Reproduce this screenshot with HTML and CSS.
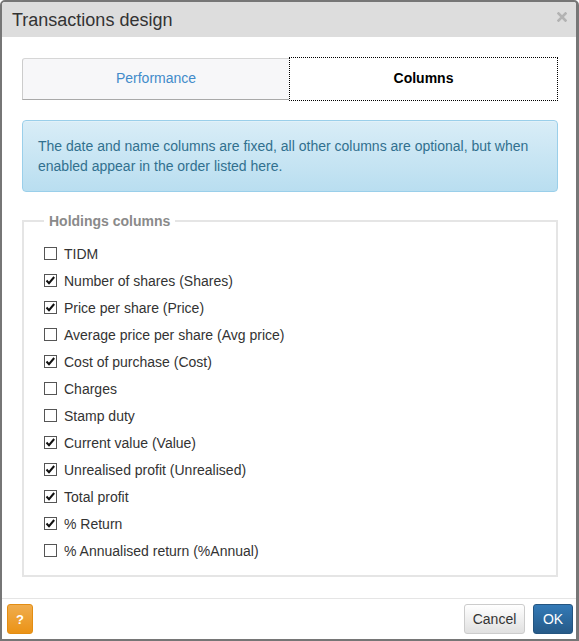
FILE: index.html
```html
<!DOCTYPE html>
<html>
<head>
<meta charset="utf-8">
<link rel="stylesheet" href="styles.css">
</head>
<body>
<div class="window">
  <div class="titlebar">
    <span class="title">Transactions design</span>
    <span class="close"><svg width="10" height="10" viewBox="0 0 10 10"><path d="M1.5 1.5 L8.5 8.5 M8.5 1.5 L1.5 8.5" stroke="#b3b3b3" stroke-width="2.6" stroke-linecap="square"/></svg></span>
  </div>
  <div class="content">
    <div class="tabs">
      <div class="tab tab-inactive">Performance</div>
      <div class="tab tab-active">Columns</div>
    </div>
    <div class="alert">The date and name columns are fixed, all other columns are optional, but when enabled appear in the order listed here.</div>
    <fieldset class="group">
      <legend>Holdings columns</legend>
      <div class="row"><span class="cb"></span><span>TIDM</span></div>
      <div class="row"><span class="cb checked"><svg width="13" height="13" viewBox="0 0 13 13"><path d="M2.5 6.5 L5 9.2 L10.2 3" fill="none" stroke="#111" stroke-width="2"/></svg></span><span>Number of shares (Shares)</span></div>
      <div class="row"><span class="cb checked"><svg width="13" height="13" viewBox="0 0 13 13"><path d="M2.5 6.5 L5 9.2 L10.2 3" fill="none" stroke="#111" stroke-width="2"/></svg></span><span>Price per share (Price)</span></div>
      <div class="row"><span class="cb"></span><span>Average price per share (Avg price)</span></div>
      <div class="row"><span class="cb checked"><svg width="13" height="13" viewBox="0 0 13 13"><path d="M2.5 6.5 L5 9.2 L10.2 3" fill="none" stroke="#111" stroke-width="2"/></svg></span><span>Cost of purchase (Cost)</span></div>
      <div class="row"><span class="cb"></span><span>Charges</span></div>
      <div class="row"><span class="cb"></span><span>Stamp duty</span></div>
      <div class="row"><span class="cb checked"><svg width="13" height="13" viewBox="0 0 13 13"><path d="M2.5 6.5 L5 9.2 L10.2 3" fill="none" stroke="#111" stroke-width="2"/></svg></span><span>Current value (Value)</span></div>
      <div class="row"><span class="cb checked"><svg width="13" height="13" viewBox="0 0 13 13"><path d="M2.5 6.5 L5 9.2 L10.2 3" fill="none" stroke="#111" stroke-width="2"/></svg></span><span>Unrealised profit (Unrealised)</span></div>
      <div class="row"><span class="cb checked"><svg width="13" height="13" viewBox="0 0 13 13"><path d="M2.5 6.5 L5 9.2 L10.2 3" fill="none" stroke="#111" stroke-width="2"/></svg></span><span>Total profit</span></div>
      <div class="row"><span class="cb checked"><svg width="13" height="13" viewBox="0 0 13 13"><path d="M2.5 6.5 L5 9.2 L10.2 3" fill="none" stroke="#111" stroke-width="2"/></svg></span><span>% Return</span></div>
      <div class="row"><span class="cb"></span><span>% Annualised return (%Annual)</span></div>
    </fieldset>
  </div>
  <div class="footer">
    <button class="btn btn-help">?</button>
    <div class="spacer"></div>
    <button class="btn btn-cancel">Cancel</button>
    <button class="btn btn-ok">OK</button>
  </div>
</div>
</body>
</html>
```
FILE: styles.css
```css
html, body {
  margin: 0;
  padding: 0;
  background: #ffffff;
}
body {
  font-family: "Liberation Sans", Arial, sans-serif;
  font-size: 14px;
  color: #333333;
}
.window {
  box-sizing: border-box;
  width: 579px;
  height: 641px;
  border: 2px solid #767676;
  border-right-width: 3px;
  border-radius: 5px 5px 0 0;
  display: flex;
  flex-direction: column;
  overflow: hidden;
  background: #ffffff;
}
.titlebar {
  height: 35px;
  background: #dddddd;
  display: flex;
  align-items: center;
  justify-content: space-between;
  padding: 0 9px 0 10px;
  flex: none;
}
.title {
  font-size: 18px;
  color: #333333;
  line-height: 35px;
  padding-top: 1px;
}
.close {
  display: flex;
  align-items: center;
  margin-top: -6px;
}
.content {
  flex: 1;
  padding: 20px 18px 0 20px;
}
.tabs {
  display: flex;
  height: 44px;
}
.tab {
  box-sizing: border-box;
  display: flex;
  align-items: center;
  justify-content: center;
  font-size: 14px;
  padding-bottom: 2px;
}
.tab-inactive {
  width: 267px;
  margin-top: 1px;
  height: 42px;
  background: #f7f7f9;
  border-top: 1px solid #d6d6d6;
  border-left: 1px solid #cccccc;
  border-bottom: 1px solid #a9a9a9;
  border-radius: 3px 0 0 0;
  color: #428bca;
}
.tab-active {
  width: 269px;
  height: 44px;
  background: #ffffff;
  border: 1px dotted #000000;
  color: #000000;
  font-weight: bold;
}
.alert {
  margin-top: 19px;
  box-sizing: border-box;
  width: 536px;
  padding: 15px 15px;
  line-height: 20px;
  color: #31708f;
  background: linear-gradient(to bottom, #d9edf7 0%, #b9def0 100%);
  border: 1px solid #9acfea;
  border-radius: 4px;
  box-shadow: inset 0 1px 0 rgba(255,255,255,0.25);
}
.group {
  margin: 21px 0 0 0;
  box-sizing: border-box;
  width: 536px;
  border: 2px solid #e5e5e5;
  padding: 11px 20px 11px 20px;
  min-width: 0;
}
.group legend {
  padding: 0 5px;
  font-weight: bold;
  color: #8a8a8a;
  font-size: 14px;
  line-height: 16px;
}
.row {
  display: flex;
  align-items: center;
  height: 27px;
  gap: 7px;
}
.cb {
  box-sizing: border-box;
  width: 13px;
  height: 13px;
  border: 1px solid #555555;
  background: #ffffff;
  position: relative;
  flex: none;
}
.cb svg {
  position: absolute;
  left: -1px;
  top: -1px;
}
.footer {
  flex: none;
  border-top: 1px solid #e5e5e5;
  display: flex;
  align-items: flex-start;
  padding: 5px 3px 5px 5px;
  height: 30px;
}
.spacer {
  flex: 1;
}
.btn {
  box-sizing: border-box;
  height: 30px;
  font-family: "Liberation Sans", Arial, sans-serif;
  font-size: 14px;
  border-radius: 3px;
  padding: 0;
  cursor: pointer;
}
.btn-help {
  width: 26px;
  color: #ffffff;
  font-weight: bold;
  font-size: 13px;
  background: linear-gradient(to bottom, #f0ad4e 0%, #eb9316 100%);
  border: 1px solid #e38d13;
}
.btn-cancel {
  width: 61px;
  color: #333333;
  background: linear-gradient(to bottom, #ffffff 0%, #e0e0e0 100%);
  border: 1px solid #cccccc;
  margin-right: 8px;
}
.btn-ok {
  width: 40px;
  color: #ffffff;
  background: linear-gradient(to bottom, #337ab7 0%, #265a88 100%);
  border: 1px solid #245580;
}
```
